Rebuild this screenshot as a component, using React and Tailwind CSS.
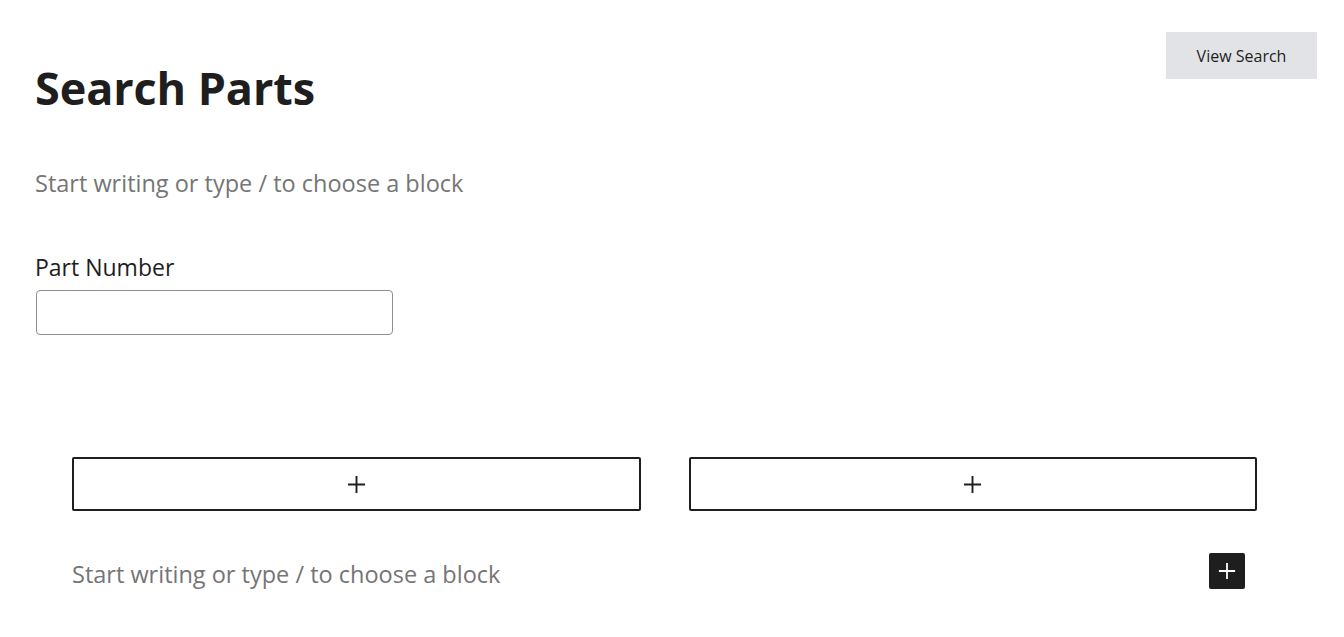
import React from "react";

const Plus = ({ className = "", stroke = "currentColor", size = 20, width = 2 }) => (
  <svg width={size} height={size} viewBox="0 0 20 20" className={className} fill="none">
    <path d="M10 1V19M1 10H19" stroke={stroke} strokeWidth={width} />
  </svg>
);

export default function App() {
  return (
    <div className="min-h-[637px] w-full bg-white text-[#1e1e1e]" style={{ fontFamily: '"Open Sans", "Noto Sans", sans-serif' }}>
      <div className="flex items-start justify-between pl-[35px] pr-[27px]">
        <h1 className="mt-[58px] text-[45px] font-bold leading-[60px] tracking-[-0.1px] text-[#1e1e1e]">Search Parts</h1>
        <button className="mt-[32px] h-[47px] w-[151px] bg-[#e2e3e6] text-[16px] text-[#1e1e1e]">View Search</button>
      </div>
      <p className="mt-[50px] pl-[35px] text-[23.5px] leading-[30px] text-[#757575]">Start writing or type / to choose a block</p>
      <div className="mt-[55px] pl-[35px]">
        <label className="block text-[23px] leading-[28px] text-[#1e1e1e]">Part Number</label>
        <input className="mt-[9px] ml-[1px] block h-[45px] w-[357px] rounded-[4px] border border-[#8c8f94] bg-white" />
      </div>
      <div className="mt-[122px] flex gap-[48px] pl-[72px] pr-[87px]">
        <button className="flex h-[54px] flex-1 items-center justify-center rounded-[2px] border-2 border-[#1e1e1e] bg-white">
          <Plus size={19} width={2} />
        </button>
        <button className="flex h-[54px] flex-1 items-center justify-center rounded-[2px] border-2 border-[#1e1e1e] bg-white">
          <Plus size={19} width={2} />
        </button>
      </div>
      <div className="mt-[42px] flex items-start justify-between pl-[72px] pr-[99px]">
        <p className="mt-[6px] text-[23.5px] leading-[30px] text-[#757575]">Start writing or type / to choose a block</p>
        <button className="flex h-[36px] w-[36px] items-center justify-center rounded-[2px] bg-[#1e1e1e]">
          <Plus size={18} width={2} stroke="#ffffff" />
        </button>
      </div>
    </div>
  );
}
